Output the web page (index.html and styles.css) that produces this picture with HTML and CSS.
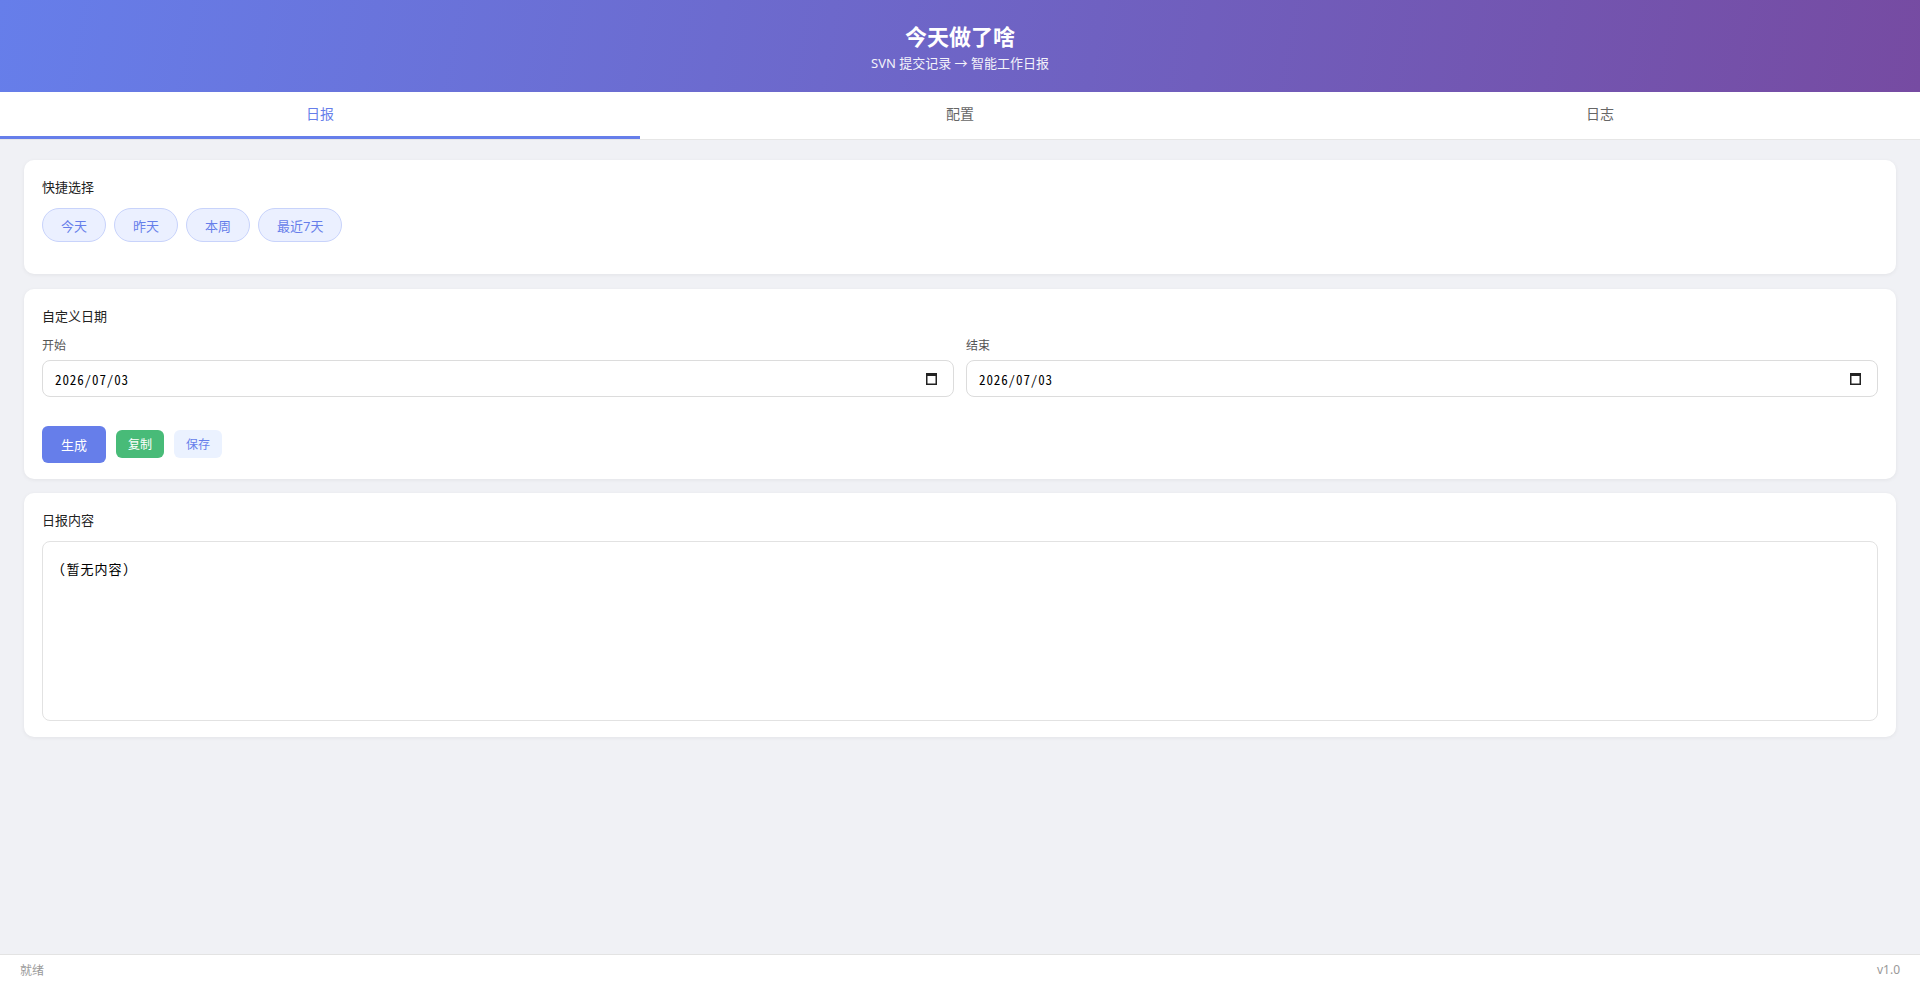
FILE: index.html
```html
<!DOCTYPE html>
<html lang="zh-CN">
<head>
  <meta charset="UTF-8">
  <title>今天做了啥</title>
  <link rel="stylesheet" href="styles.css">
</head>
<body>
  <div class="app">
    <header class="app-header">
      <h1 class="app-title">今天做了啥</h1>
      <p class="app-subtitle">SVN 提交记录 → 智能工作日报</p>
    </header>

    <nav class="tabs">
      <div class="tab active">日报</div>
      <div class="tab">配置</div>
      <div class="tab">日志</div>
    </nav>

    <main class="content">
      <section class="card">
        <div class="card-title">快捷选择</div>
        <div class="quick-row">
          <button class="chip">今天</button>
          <button class="chip">昨天</button>
          <button class="chip">本周</button>
          <button class="chip">最近7天</button>
        </div>
      </section>

      <section class="card">
        <div class="card-title">自定义日期</div>
        <div class="date-grid">
          <div class="field">
            <label class="field-label">开始</label>
            <div class="date-box">
              <input type="text" class="date-text" value="2026/07/03">
              <svg class="cal-icon" width="11" height="13" viewBox="0 0 11 13">
                <rect x="0.75" y="1.75" width="9.5" height="10.5" fill="none" stroke="#222" stroke-width="1.5"/>
                <rect x="0" y="1" width="11" height="3" fill="#222"/>
              </svg>
            </div>
          </div>
          <div class="field">
            <label class="field-label">结束</label>
            <div class="date-box">
              <input type="text" class="date-text" value="2026/07/03">
              <svg class="cal-icon" width="11" height="13" viewBox="0 0 11 13">
                <rect x="0.75" y="1.75" width="9.5" height="10.5" fill="none" stroke="#222" stroke-width="1.5"/>
                <rect x="0" y="1" width="11" height="3" fill="#222"/>
              </svg>
            </div>
          </div>
        </div>
        <div class="action-row">
          <button class="btn btn-primary">生成</button>
          <button class="btn btn-small btn-green">复制</button>
          <button class="btn btn-small btn-light">保存</button>
        </div>
      </section>

      <section class="card">
        <div class="card-title">日报内容</div>
        <textarea class="report-box" readonly>(暂无内容)</textarea>
      </section>
    </main>

    <footer class="status-bar">
      <span>就绪</span>
      <span>v1.0</span>
    </footer>
  </div>
</body>
</html>
```

FILE: styles.css
```css
html, body {
  margin: 0;
  height: 100%;
}
body {
  font-family: "Noto Sans", "Noto Sans CJK SC", sans-serif;
  background: #f0f1f5;
  color: #333;
}
.app {
  min-height: 100vh;
  display: flex;
  flex-direction: column;
}

.app-header {
  background: linear-gradient(100deg, #667eea 0%, #764ba2 100%);
  color: #fff;
  text-align: center;
  padding: 22px 0 20px;
}
.app-title {
  margin: 0;
  font-size: 22px;
  line-height: 28px;
  font-weight: 700;
}
.app-subtitle {
  margin: 4px 0 0;
  font-size: 13px;
  line-height: 18px;
  opacity: 0.92;
}

.tabs {
  display: flex;
  background: #fff;
  border-bottom: 1px solid #e6e6e6;
}
.tab {
  flex: 1;
  text-align: center;
  font-size: 14px;
  line-height: 44px;
  color: #666;
  border-bottom: 3px solid transparent;
}
.tab.active {
  color: #667eea;
  border-bottom-color: #667eea;
}

.content {
  flex: 1;
  padding: 20px 24px;
  display: flex;
  flex-direction: column;
  gap: 14.5px;
}
.card {
  background: #fff;
  border-radius: 10px;
  box-shadow: 0 1px 4px rgba(0, 0, 0, 0.06);
  padding: 18px 18px 16px;
}
.card-title {
  font-size: 13px;
  line-height: 18px;
  font-weight: 400;
  color: #222;
  margin-bottom: 12px;
}

.quick-row {
  display: flex;
  gap: 8px;
  margin-bottom: 16px;
}
.chip {
  font-family: inherit;
  font-size: 13px;
  height: 34px;
  padding: 0 18px;
  border-radius: 17px;
  border: 1px solid #c8d3fb;
  background: #ebf0ff;
  color: #667eea;
}

.date-grid {
  display: grid;
  grid-template-columns: 1fr 1fr;
  gap: 12px;
}
.field {
  display: flex;
  flex-direction: column;
}
.field-label {
  font-size: 12px;
  line-height: 18px;
  color: #555;
  margin-bottom: 5px;
}
.date-box {
  display: flex;
  align-items: center;
  height: 37px;
  box-sizing: border-box;
  border: 1px solid #dcdcdc;
  border-radius: 8px;
  padding: 0 16px 0 12px;
  background: #fff;
}
.date-text {
  flex: 1;
  border: none;
  outline: none;
  padding: 3px 0 0;
  font-family: "Noto Sans Mono CJK SC", "DejaVu Sans Mono", monospace;
  font-size: 13px;
  letter-spacing: 0.9px;
  color: #000;
  background: transparent;
}
.cal-icon {
  flex: none;
}

.action-row {
  display: flex;
  align-items: center;
  gap: 10px;
  margin-top: 29px;
}
.btn {
  font-family: inherit;
  border: none;
  cursor: pointer;
}
.btn-primary {
  height: 37px;
  width: 64px;
  border-radius: 6px;
  background: #667eea;
  color: #fff;
  font-size: 13px;
}
.btn-small {
  height: 28px;
  width: 48px;
  border-radius: 6px;
  font-size: 12px;
}
.btn-green {
  background: #48bb78;
  color: #fff;
}
.btn-light {
  background: #ebf2ff;
  color: #667eea;
}

.report-box {
  display: block;
  width: 100%;
  height: 180px;
  box-sizing: border-box;
  border: 1px solid #e2e2e2;
  border-radius: 8px;
  padding: 15px 16px 14px;
  font-family: "Noto Sans Mono CJK SC", "DejaVu Sans Mono", monospace;
  font-size: 13px;
  letter-spacing: 1px;
  line-height: 1.8;
  color: #000;
  resize: none;
  outline: none;
}

.status-bar {
  display: flex;
  justify-content: space-between;
  align-items: center;
  height: 29px;
  padding: 0 20px;
  background: #fff;
  border-top: 1px solid #e3e3e3;
  font-size: 12px;
  color: #999;
}
```
